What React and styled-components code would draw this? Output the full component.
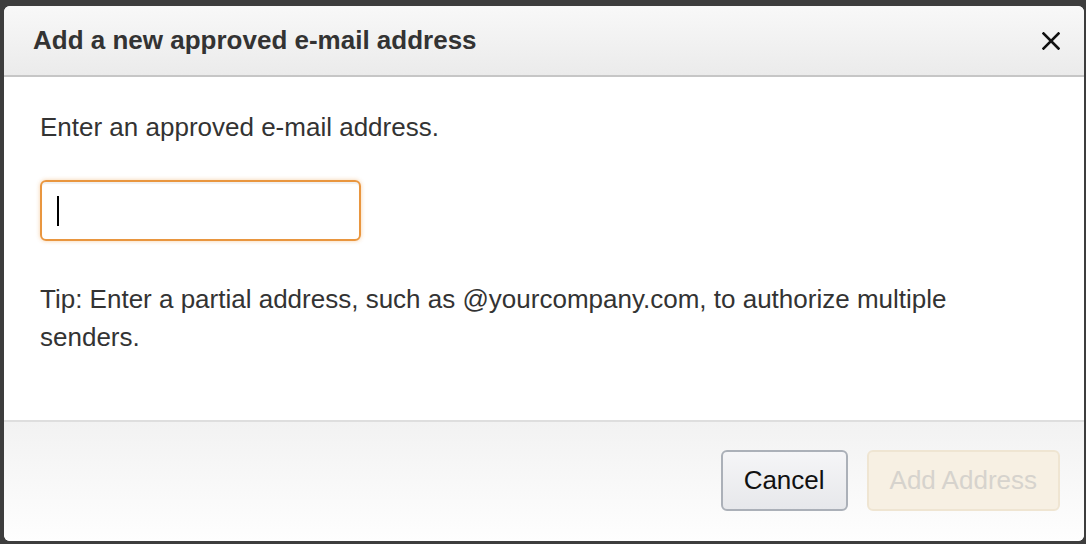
import React from 'react';
import styled, {createGlobalStyle} from 'styled-components';

const GlobalStyle = createGlobalStyle`
	html, body {
		margin: 0;
		padding: 0;
		background: #3d3d3d;
	}
	body {
		font-family: "Liberation Sans", Arial, Helvetica, sans-serif;
	}
`;

const CloseIcon = () => (
	<svg width="18" height="18" viewBox="0 0 18 18">
		<path d="M1.5 1.5 L16.5 16.5 M16.5 1.5 L1.5 16.5" stroke="#111" strokeWidth="2.6" strokeLinecap="square" />
	</svg>
);

const App = () => {
	return (
		<Page>
			<GlobalStyle />
			<Dialog>
				<Header>
					<Title>Add a new approved e-mail address</Title>
					<CloseButton aria-label="Close">
						<CloseIcon />
					</CloseButton>
				</Header>
				<Body>
					<Text>Enter an approved e-mail address.</Text>
					<InputBox>
						<Caret />
						<Field type="text" />
					</InputBox>
					<Tip>Tip: Enter a partial address, such as @yourcompany.com, to authorize multiple senders.</Tip>
				</Body>
				<Footer>
					<Button>Cancel</Button>
					<Button disabledLook>Add Address</Button>
				</Footer>
			</Dialog>
		</Page>
	);
};

const Page = styled.div`
	width: 1086px;
	height: 544px;
	padding: 6px 2px 3px 4px;
	box-sizing: border-box;
	display: flex;
`;

const Dialog = styled.div`
	flex: 1;
	display: flex;
	flex-direction: column;
	background: #fff;
	border-radius: 6px;
	overflow: hidden;
`;

const Header = styled.div`
	height: 69px;
	flex-shrink: 0;
	display: flex;
	align-items: center;
	justify-content: space-between;
	padding: 0 24px 0 29px;
	background: linear-gradient(to bottom, #f8f8f8, #ebebeb);
	border-bottom: 2px solid #c6c6c6;
`;

const Title = styled.h1`
	margin: 0;
	font-size: 26px;
	font-weight: bold;
	color: #333;
`;

const CloseButton = styled.button`
	border: none;
	background: none;
	padding: 0;
	width: 18px;
	height: 18px;
	display: flex;
	cursor: pointer;
`;

const Body = styled.div`
	flex: 1;
	padding: 31px 36px 0 36px;
	display: flex;
	flex-direction: column;
	align-items: flex-start;
	color: #333;
	font-size: 26px;
	line-height: 38px;
`;

const Text = styled.p`
	margin: 0;
`;

const InputBox = styled.div`
	margin-top: 34px;
	width: 321px;
	height: 61px;
	box-sizing: border-box;
	border: 2px solid #e9963f;
	border-radius: 6px;
	box-shadow: 0 0 4px rgba(233, 150, 63, 0.45), inset 0 2px 1px rgba(0, 0, 0, 0.06);
	display: flex;
	align-items: center;
	padding-left: 15px;
`;

const Caret = styled.span`
	width: 2px;
	height: 30px;
	background: #000;
	flex-shrink: 0;
`;

const Field = styled.input`
	flex: 1;
	min-width: 0;
	border: none;
	outline: none;
	background: transparent;
	font: inherit;
	padding: 0;
`;

const Tip = styled.p`
	margin: 39px 0 0 0;
`;

const Footer = styled.div`
	height: 121px;
	flex-shrink: 0;
	box-sizing: border-box;
	border-top: 2px solid #dedede;
	background: linear-gradient(to bottom, #f2f2f2, #fefefe);
	display: flex;
	align-items: flex-start;
	justify-content: flex-end;
	gap: 19px;
	padding: 28px 24px 0 0;
`;

const Button = styled.button`
	height: 61px;
	padding: 0 21px;
	font-family: "Liberation Sans", Arial, Helvetica, sans-serif;
	font-size: 26px;
	border-radius: 6px;
	border: 2px solid ${({disabledLook}) => disabledLook ? '#efe5d2' : '#abb0b8'};
	background: ${({disabledLook}) => disabledLook ? '#f7f0e3' : 'linear-gradient(to bottom, #f5f5f7, #e7e8eb)'};
	color: ${({disabledLook}) => disabledLook ? '#d6d3cd' : '#111'};
`;

export default App;
